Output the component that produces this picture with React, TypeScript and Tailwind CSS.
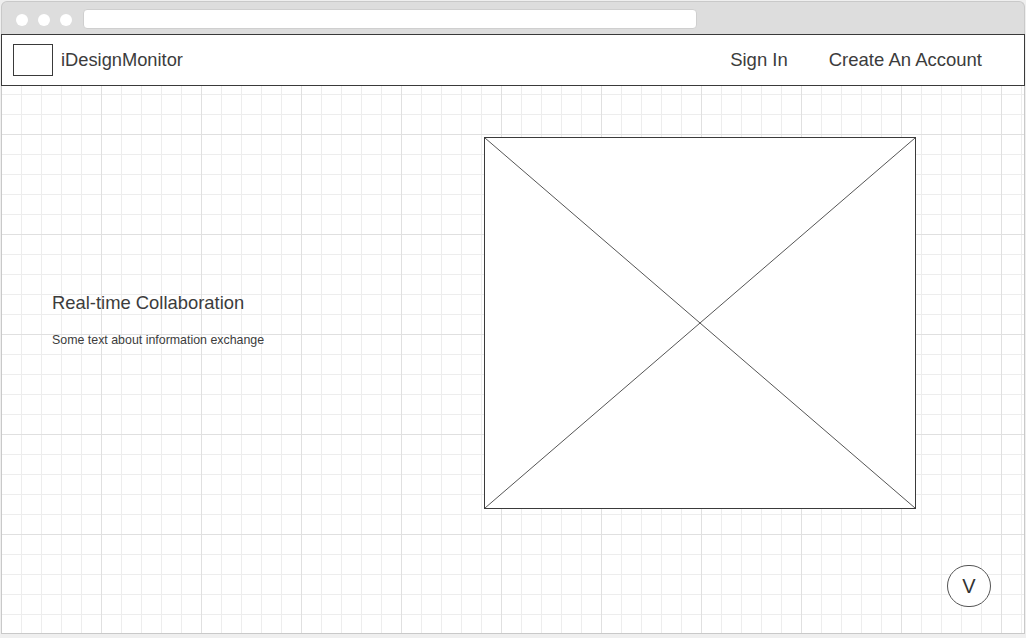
import React from "react";

export default function App() {
  return (
    <div className="w-[1026px] h-[638px] bg-[#efefef] overflow-hidden font-['Liberation_Sans',Arial,sans-serif] text-[#3c3c3c]">
      <div className="ml-[1px] mt-[1px] w-[1024px] h-[633px] flex flex-col">
        {/* browser top bar */}
        <div className="h-[33px] shrink-0 bg-[#dddddd] border-t border-x border-[#c9c9c9] rounded-t-[6px] flex items-center pl-[14px]">
          <div className="flex items-center gap-[10px] mt-[3px]">
            <span className="w-[12px] h-[12px] rounded-full bg-white" />
            <span className="w-[12px] h-[12px] rounded-full bg-white" />
            <span className="w-[12px] h-[12px] rounded-full bg-white" />
          </div>
          <div className="ml-[11px] mt-[2px] w-[614px] h-[20px] bg-white rounded-[4px] border border-[#cfcfcf]" />
        </div>
        {/* header */}
        <div className="h-[52px] shrink-0 bg-white border border-[#3a3a3a] flex items-center pl-[11px] pr-[42px]">
          <div className="w-[40px] h-[32px] border border-[#3a3a3a]" />
          <span className="ml-[8px] text-[18.3px] leading-none">iDesignMonitor</span>
          <div className="ml-auto flex items-center gap-[41px] text-[18.5px] leading-none">
            <span>Sign In</span>
            <span>Create An Account</span>
          </div>
        </div>
        {/* body with grid */}
        <div className="relative flex-1 bg-white border-x border-b border-[#c9c9c9] bg-origin-border bg-[image:linear-gradient(to_right,#e0e0e0_1px,transparent_1px),linear-gradient(to_bottom,#e0e0e0_1px,transparent_1px),linear-gradient(to_right,#ededed_1px,transparent_1px),linear-gradient(to_bottom,#ededed_1px,transparent_1px)] bg-[size:100px_100px,100px_100px,20px_20px,20px_20px] bg-[position:0_48px,0_48px,0_8px,0_8px] flex pl-[50px] pt-[51px]">
          <div className="w-[432px] shrink-0 pt-[154px]">
            <div className="text-[18.4px] leading-[24px]">Real-time Collaboration</div>
            <div className="mt-[17px] text-[12.4px] leading-[16px]">Some text about information exchange</div>
          </div>
          <div className="w-[432px] h-[372px] shrink-0 border border-[#3a3a3a] bg-white">
            <svg width="430" height="370" viewBox="0 0 430 370" className="block">
              <line x1="0" y1="0" x2="430" y2="370" stroke="#555" strokeWidth="1" />
              <line x1="430" y1="0" x2="0" y2="370" stroke="#555" strokeWidth="1" />
            </svg>
          </div>
          <div className="absolute right-[33px] bottom-[26px] w-[44px] h-[42px] rounded-full border border-[#555] bg-white flex items-center justify-center text-[20px] leading-none text-[#333]">
            V
          </div>
        </div>
      </div>
    </div>
  );
}
